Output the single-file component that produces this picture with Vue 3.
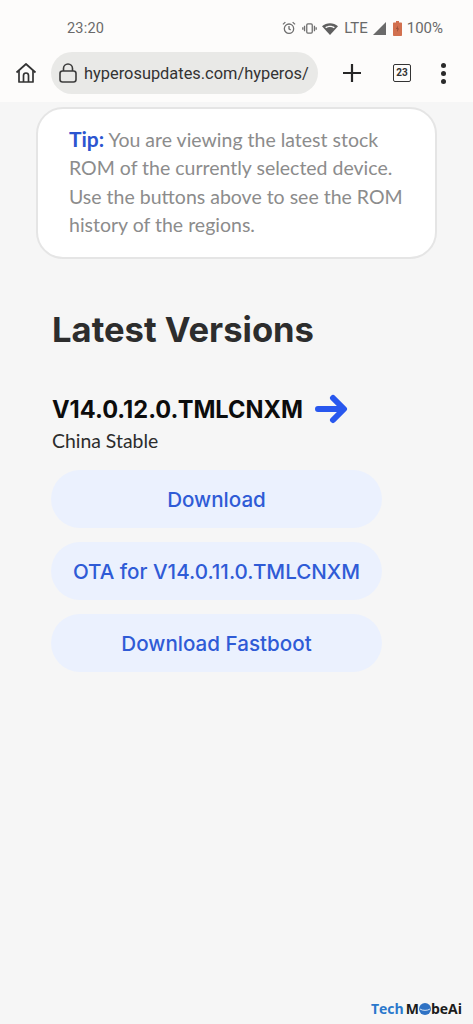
<script setup>
const buttons = ['Download', 'OTA for V14.0.11.0.TMLCNXM', 'Download Fastboot']
</script>

<template>
  <div class="screen">
    <header class="chrome">
      <div class="status">
        <span class="time">23:20</span>
        <div class="status-right">
          <svg class="alarm" width="14" height="14" viewBox="0 0 15 15" fill="none" stroke="#6f6f6f" stroke-width="1.4">
            <circle cx="7.5" cy="8.2" r="5" />
            <path d="M7.5 5.4v3l1.8 1.2M1 3.6 3.600 1.200M14 3.600 11.400 1.200" />
          </svg>
          <svg class="vib" width="15" height="11" viewBox="0 0 16 12" fill="none" stroke="#6f6f6f" stroke-width="1.4">
            <rect x="5" y="1" width="6" height="10" rx="1.2" />
            <path d="M2.600 3v6M13.400 3v6M.7 4.600v2.800M15.300 4.600v2.800" />
          </svg>
          <svg class="wifi" width="16" height="13" viewBox="0 0 16 13">
            <path d="M0 4.200C4.400.2 11.600.2 16 4.200L8 13Z" fill="#5f5f5f" />
            <path d="M3.200 5.200c2.800-2 6.800-2 9.600 0l-.9 1C9.500 4.700 6.500 4.700 4.100 6.200Z" fill="#fdfcfb" />
          </svg>
          <span class="lte">LTE</span>
          <svg class="signal" width="13" height="13" viewBox="0 0 14 14"><path d="M14 0v14H0Z" fill="#6a6a6a" /></svg>
          <svg class="batt" width="9" height="15" viewBox="0 0 9 15">
            <path d="M3 0h3v1.500h2.200a.8.8 0 0 1 .8.800V14.200a.8.8 0 0 1-.8.800H.8a.8.800 0 0 1-.8-.8V2.300a.8.8 0 0 1 .8-.8H3Z" fill="#d2704f" />
            <path d="M5 4.500 3 8h1.500L4 11l2-3.500H4.500Z" fill="#8f4a35" />
          </svg>
          <span class="pct">100%</span>
        </div>
      </div>
      <div class="toolbar">
        <svg class="home" width="22" height="22" viewBox="0 0 22 22" fill="none" stroke="#333" stroke-width="1.700" stroke-linejoin="round">
          <path d="M1.500 10.500 11 2l9.500 8.500" />
          <path d="M4 8.500V20h14V8.500" />
          <path d="M8.500 20v-6.500a2.500 2.500 0 0 1 5 0V20" />
        </svg>
        <div class="omnibox">
          <svg width="18" height="20" viewBox="0 0 18 20" fill="none" stroke="#3c3c3c" stroke-width="1.600">
            <rect x="1" y="8" width="16" height="11" rx="2.500" />
            <path d="M4.500 8V5.500a4.500 4.500 0 0 1 9 0V8" />
          </svg>
          <span class="url">hyperosupdates.com/hyperos/</span>
        </div>
        <svg class="plus" width="18" height="18" viewBox="0 0 18 18" stroke="#262626" stroke-width="2.200"><path d="M9 0v18M0 9h18" /></svg>
        <div class="tabs">23</div>
        <div class="menu"><i></i><i></i><i></i></div>
      </div>
    </header>

    <main class="page">
      <section class="tip">
        <p><b>Tip:</b> You are viewing the latest stock ROM of the currently selected device. Use the buttons above to see the ROM history of the regions.</p>
      </section>

      <h1>Latest Versions</h1>

      <div class="version">
        <span>V14.0.12.0.TMLCNXM</span>
        <svg width="33" height="30" viewBox="0 0 33 30" fill="none" stroke="#2857ee" stroke-width="6" stroke-linecap="round" stroke-linejoin="round">
          <path d="M3 15h25M18 4l11 11-11 11" />
        </svg>
      </div>
      <p class="region">China Stable</p>

      <div class="buttons">
        <a v-for="b in buttons" :key="b" class="btn">{{ b }}</a>
      </div>
    </main>

    <div class="mark">
      <span class="tech">Tech</span><span class="mobe">M<svg width="12" height="12" viewBox="0 0 13 13"><circle cx="6.500" cy="6.500" r="6.500" fill="#2f72c4" /><path d="M1 6.500c3 2 8 2 11 0" stroke="#dfeaf7" fill="none" /></svg>beAi</span>
    </div>
  </div>
</template>

<style>
html, body { margin: 0; background: #f6f6f6; }
</style>

<style scoped>
.screen {
  position: relative;
  width: 473px;
  height: 1024px;
  overflow: hidden;
  background: #f6f6f6;
  font-family: "Noto Sans", sans-serif;
}
.chrome { height: 102px; background: #fdfcfb; }
.status {
  height: 46px;
  display: flex;
  align-items: center;
  justify-content: space-between;
  padding: 10px 30px 0 67px;
  box-sizing: border-box;
  color: #6a6a6a;
  font: 15px Roboto, sans-serif;
}
.time { font-size: 14.500px; letter-spacing: .2px; }
.status-right { display: flex; align-items: center; }
.vib { margin-left: 6px; }
.wifi { margin-left: 5px; }
.lte { margin-left: 6px; font-size: 15px; }
.signal { margin-left: 5px; }
.batt { margin-left: 7px; }
.pct { margin-left: 5px; font-size: 15px; }
.toolbar {
  height: 54px;
  display: flex;
  align-items: center;
}
.home { margin-left: 15px; flex: none; }
.omnibox {
  margin-left: 14px;
  width: 267px;
  height: 42px;
  box-sizing: border-box;
  border-radius: 21px;
  background: #e9e9e7;
  display: flex;
  align-items: center;
  padding: 0 6px 0 8px;
  flex: none;
}
.url {
  margin-left: 7px;
  font: 16.400px Roboto, sans-serif;
  color: #333;
  white-space: nowrap;
}
.plus { margin-left: 25px; flex: none; }
.tabs {
  margin-left: 32px;
  width: 16px;
  height: 16px;
  border: 1.500px solid #333;
  border-radius: 2px;
  flex: none;
  text-align: center;
  font: 700 10px/16px Roboto, sans-serif;
  color: #333;
}
.menu {
  margin-left: 30px;
  display: flex;
  flex-direction: column;
  gap: 3px;
}
.menu i { width: 5px; height: 5px; border-radius: 50%; background: #2a2a2a; display: block; }

.page { padding: 5px 36px 0; box-sizing: border-box; }
.tip {
  width: 401px;
  height: 152px;
  box-sizing: border-box;
  background: #fff;
  border: 2px solid #e5e5e5;
  border-radius: 27px;
  padding: 16px 20px 0 31px;
}
.tip p {
  margin: 0;
  font: 400 19.500px/28.400px Lato, sans-serif;
  color: #8c8c8c;
}
.tip b { color: #2c55d0; font-weight: 700; font-size: 21px; }
h1 {
  margin: 47px 0 0 16px;
  font: 700 34.600px/46px Inter, sans-serif;
  color: #2d2d2d;
}
.version {
  margin: 42px 0 0 16px;
  display: flex;
  align-items: center;
  gap: 12px;
  height: 32px;
  font: 700 23.600px/32px Inter, sans-serif;
  color: #0c0c0c;
}
.version svg { margin-top: -3px; }
.region {
  margin: 2px 0 0 16px;
  font: 400 19.400px/26px Lato, sans-serif;
  color: #2c2c2c;
}
.buttons {
  margin: 16px 0 0 15px;
  width: 331px;
  display: flex;
  flex-direction: column;
  gap: 14px;
}
.btn {
  height: 58px;
  border-radius: 29px;
  background: #ebf1fe;
  color: #2f5bd6;
  display: flex;
  align-items: center;
  justify-content: center;
  font: 500 20.600px Inter, sans-serif;
  white-space: nowrap;
}
.mark {
  position: absolute;
  right: 11px;
  bottom: 6px;
  display: flex;
  align-items: center;
  font: 700 14px/18px "Open Sans", sans-serif;
}
.tech { color: #2a78cc; }
.mobe { color: #1b1b1b; margin-left: 2px; display: flex; align-items: center; }
</style>
